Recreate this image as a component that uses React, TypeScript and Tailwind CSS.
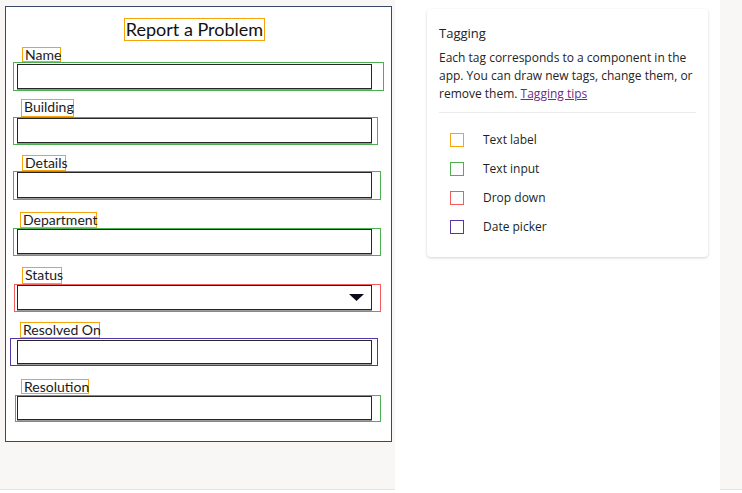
import React from "react";

type Field = {
  label: string;
  labelCls: string;
  boxCls: string;
  inputCls: string;
  dropdown?: boolean;
};

const fields: Field[] = [
  {
    label: "Name",
    labelCls: "mt-[6px] ml-[16px] w-[39px] h-[15px]",
    boxCls: "ml-[7px] w-[371px] h-[29px] border-[#4caf50]",
    inputCls: "ml-[3px] mt-[1px] h-[25px]",
  },
  {
    label: "Building",
    labelCls: "mt-[8px] ml-[15px] w-[53px] h-[18px]",
    boxCls: "ml-[7px] w-[365px] h-[28px] border-[#4caf50]",
    inputCls: "ml-[3px] mt-0 h-[25px]",
  },
  {
    label: "Details",
    labelCls: "mt-[10px] ml-[16px] w-[44px] h-[16px]",
    boxCls: "ml-[7px] w-[368px] h-[29px] border-[#4caf50]",
    inputCls: "ml-[3px] mt-0 h-[26px]",
  },
  {
    label: "Department",
    labelCls: "mt-[12px] ml-[14px] w-[77px] h-[16px]",
    boxCls: "ml-[7px] w-[368px] h-[28px] border-[#4caf50]",
    inputCls: "ml-[3px] mt-0 h-[25px]",
  },
  {
    label: "Status",
    labelCls: "mt-[11px] ml-[16px] w-[40px] h-[17px]",
    boxCls: "ml-[8px] w-[367px] h-[28px] border-[#f25c5c]",
    inputCls: "ml-[2px] mt-0 h-[25px]",
    dropdown: true,
  },
  {
    label: "Resolved On",
    labelCls: "mt-[10px] ml-[14px] w-[80px] h-[16px]",
    boxCls: "ml-[4px] w-[368px] h-[28px] border-[#5436a9]",
    inputCls: "ml-[6px] mt-[1px] h-[24px]",
  },
  {
    label: "Resolution",
    labelCls: "mt-[13px] ml-[15px] w-[68px] h-[15px] mb-[1px]",
    boxCls: "ml-[9px] w-[366px] h-[27px] border-[#4caf50]",
    inputCls: "ml-[1px] mt-0 h-[24px]",
  },
];

const tags = [
  { name: "Text label", cls: "border-[#f7a30a]" },
  { name: "Text input", cls: "border-[#4caf50]" },
  { name: "Drop down", cls: "border-[#f25c5c]" },
  { name: "Date picker", cls: "border-[#5436a9]" },
];

const FormField = ({ f }: { f: Field }) => (
  <>
    <div
      className={`${f.labelCls} border border-[#f7a30a] pl-[2px] text-[14px] leading-[14px] text-[#1b1b1b] whitespace-nowrap`}
    >
      {f.label}
    </div>
    <div className={`${f.boxCls} border flex`}>
      <div
        className={`${f.inputCls} w-[355px] bg-white border border-[#262626] shadow-[0_1px_0_#9a9a9a] flex items-center justify-end pr-[7px]`}
      >
        {f.dropdown && (
          <svg width="15" height="7" viewBox="0 0 15 7">
            <path d="M0 0 L15 0 L7.5 7 Z" fill="#0b0b1a" />
          </svg>
        )}
      </div>
    </div>
  </>
);

export default function App() {
  return (
    <div className="flex w-[742px] h-[493px] bg-white font-['Lato',sans-serif]">
      <div className="w-[395px] h-[490px] bg-[#f8f7f6] border-b border-[#e6e4e1]">
        <div className="ml-[5px] mt-[6px] w-[387px] h-[436px] bg-white border border-[#394869] flex flex-col items-start">
          <div className="mt-[11px] ml-[118px] w-[141px] h-[23px] border border-[#f7a30a] flex items-center justify-center text-[18px] text-[#111] whitespace-nowrap">
            Report a Problem
          </div>
          {fields.map((f) => (
            <FormField key={f.label} f={f} />
          ))}
        </div>
      </div>

      <div className="w-[325px] h-[493px] bg-white">
        <div className="ml-[32px] mt-[9px] w-[281px] rounded-[4px] bg-white shadow-[0_1px_3px_rgba(0,0,0,0.18)] px-[12px] pt-[14px] pb-[16px] font-['Open_Sans',sans-serif] text-[12px] text-[#252423]">
          <div className="text-[13px] leading-[20px] text-[#252423]">Tagging</div>
          <p className="mt-[6px] leading-[18px]">
            Each tag corresponds to a component in the app. You can draw new tags, change them, or
            remove them.{" "}
            <a className="underline text-[#6b2d80]" href="#tips">
              Tagging tips
            </a>
          </p>
          <div className="mt-[9px] border-t border-[#edebe9]" />
          <div className="mt-[12px] flex flex-col">
            {tags.map((t) => (
              <div key={t.name} className="h-[29px] flex items-center pl-[11px]">
                <span className={`w-[14px] h-[14px] border ${t.cls}`} />
                <span className="ml-[19px] text-[12px] text-[#201f1e]">{t.name}</span>
              </div>
            ))}
          </div>
        </div>
      </div>
      <div className="flex-1 h-[490px] bg-[#f8f7f6] border-b border-[#e6e4e1]" />
    </div>
  );
}
